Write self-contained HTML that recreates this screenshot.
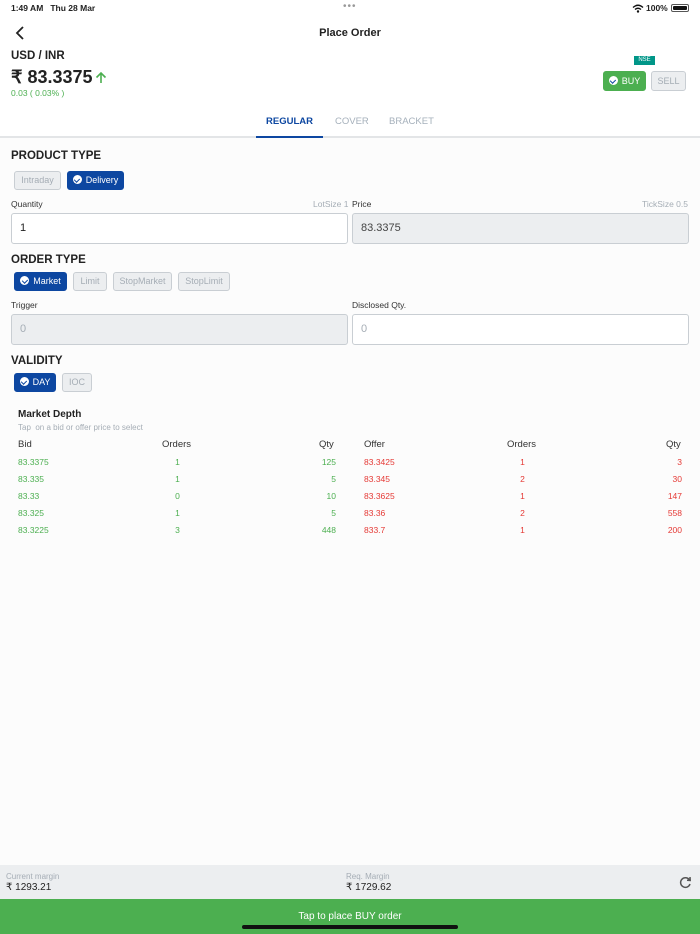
<!DOCTYPE html>
<html><head><meta charset="utf-8"><style>
*{margin:0;padding:0;box-sizing:border-box}
body{width:700px;height:934px;position:relative;overflow:hidden;background:#fcfcfc;font-family:"Liberation Sans",sans-serif;color:#222}
.a{position:absolute;white-space:nowrap}
.hdr{position:absolute;left:0;top:0;width:700px;height:138px;background:#fff;border-bottom:2px solid #e3e5e7}
.btn{position:absolute;height:19px;border-radius:3px;font-size:9px;line-height:17px;text-align:center;border:1px solid #c9ced3;background:#eceef0;color:#a5adb5}
.on{background:#0d47a1;border-color:#0d47a1;color:#fff}
.chk{display:inline-block;width:9px;height:9px;border-radius:50%;background:#fff;vertical-align:-1px;margin-right:4px;position:relative}
.chk:after{content:"";position:absolute;left:2.5px;top:1.5px;width:2.5px;height:4px;border:solid #0d47a1;border-width:0 1.5px 1.5px 0;transform:rotate(45deg)}
.sec{font-size:11.5px;font-weight:bold;color:#222}
.lbl{font-size:8.5px;color:#333}
.inp{position:absolute;height:31px;border:1px solid #c9ced3;border-radius:3px;font-size:11px;line-height:29px;padding-left:8px}
.g{color:#4caf50;font-size:8.5px}
.r{color:#e53935;font-size:8.5px}
</style></head><body>
<div class="hdr"></div>
<div class="a" style="left:11px;top:3px;font-size:8.5px;font-weight:bold">1:49 AM&nbsp;&nbsp;&nbsp;Thu 28 Mar</div>
<div class="a" style="left:343px;top:1px;font-size:10px;color:#999;letter-spacing:1px">•••</div>
<svg class="a" style="left:632px;top:4px" width="12" height="9"><path d="M1 3.5 Q6 -1 11 3.5 M3 5.5 Q6 3 9 5.5" stroke="#111" stroke-width="1.4" fill="none"/><circle cx="6" cy="7.5" r="1.2" fill="#111"/></svg>
<div class="a" style="left:646px;top:3px;font-size:8.5px;font-weight:bold">100%</div>
<div class="a" style="left:671px;top:4px;width:18px;height:8px;border:1px solid #555;border-radius:2px;padding:1px"><div style="width:100%;height:100%;background:#111;border-radius:1px"></div></div>
<svg class="a" style="left:14px;top:25px" width="12" height="16"><path d="M9 2 L3 8 L9 14" stroke="#222" stroke-width="1.8" fill="none"/></svg>
<div class="a" style="left:0;width:700px;text-align:center;top:27px;font-size:11px;font-weight:bold">Place Order</div>
<div class="a" style="left:11px;top:50px;font-size:11.5px;font-weight:bold">USD / INR</div>
<div class="a" style="left:11px;top:67px;font-size:18px;font-weight:bold">₹ 83.3375</div>
<svg class="a" style="left:95px;top:71px" width="12" height="13"><path d="M6 12 V2 M1.5 6.5 L6 2 L10.5 6.5" stroke="#4caf50" stroke-width="1.6" fill="none"/></svg>
<div class="a g" style="left:11px;top:88px">0.03 ( 0.03% )</div>
<div class="a" style="left:634px;top:56px;width:21px;height:9px;background:#009688;color:#fff;font-size:6px;line-height:9px;text-align:center">NSE</div>
<div class="btn" style="left:603px;top:71px;width:43px;height:20px;line-height:18px;background:#4caf50;border-color:#4caf50;color:#fff"><span class="chk"></span>BUY</div>
<div class="btn" style="left:651px;top:71px;width:35px;height:20px;line-height:18px">SELL</div>
<div class="a" style="left:256px;top:116px;width:67px;text-align:center;font-size:9.5px;font-weight:bold;color:#0d47a1">REGULAR</div>
<div class="a" style="left:256px;top:136px;width:67px;height:2px;background:#0d47a1"></div>
<div class="a" style="left:335px;top:116px;font-size:9.5px;color:#a5b0bb">COVER</div>
<div class="a" style="left:389px;top:116px;font-size:9.5px;color:#a5b0bb">BRACKET</div>

<div class="a sec" style="left:11px;top:150px">PRODUCT TYPE</div>
<div class="btn" style="left:14px;top:171px;width:47px">Intraday</div>
<div class="btn on" style="left:67px;top:171px;width:57px"><span class="chk"></span>Delivery</div>
<div class="a lbl" style="left:11px;top:199px">Quantity</div>
<div class="a lbl" style="left:313px;top:199px;color:#a5adb5">LotSize 1</div>
<div class="a lbl" style="left:352px;top:199px">Price</div>
<div class="a lbl" style="left:642px;top:199px;color:#a5adb5">TickSize 0.5</div>
<div class="inp" style="left:11px;top:213px;width:337px;background:#fff">1</div>
<div class="inp" style="left:352px;top:213px;width:337px;background:#eceef0;color:#444">83.3375</div>

<div class="a sec" style="left:11px;top:254px">ORDER TYPE</div>
<div class="btn on" style="left:14px;top:272px;width:53px"><span class="chk"></span>Market</div>
<div class="btn" style="left:73px;top:272px;width:34px">Limit</div>
<div class="btn" style="left:113px;top:272px;width:59px">StopMarket</div>
<div class="btn" style="left:178px;top:272px;width:52px">StopLimit</div>
<div class="a lbl" style="left:11px;top:300px">Trigger</div>
<div class="a lbl" style="left:352px;top:300px">Disclosed Qty.</div>
<div class="inp" style="left:11px;top:314px;width:337px;background:#eceef0;color:#a5adb5">0</div>
<div class="inp" style="left:352px;top:314px;width:337px;background:#fff;color:#a5adb5">0</div>

<div class="a sec" style="left:11px;top:355px">VALIDITY</div>
<div class="btn on" style="left:14px;top:373px;width:42px"><span class="chk"></span>DAY</div>
<div class="btn" style="left:62px;top:373px;width:30px">IOC</div>

<div class="a" style="left:18px;top:409px;font-size:10px;font-weight:bold">Market Depth</div>
<div class="a" style="left:18px;top:423px;font-size:8px;color:#a5adb5">Tap&nbsp; on a bid or offer price to select</div>
<div class="a" style="left:18px;top:439px;font-size:9.5px;color:#333">Bid</div>
<div class="a" style="left:162px;top:439px;font-size:9.5px;color:#333">Orders</div>
<div class="a" style="left:319px;top:439px;font-size:9.5px;color:#333">Qty</div>
<div class="a" style="left:364px;top:439px;font-size:9.5px;color:#333">Offer</div>
<div class="a" style="left:507px;top:439px;font-size:9.5px;color:#333">Orders</div>
<div class="a" style="left:666px;top:439px;font-size:9.5px;color:#333">Qty</div>

<div class="a g" style="left:18px;top:454px;line-height:17px">83.3375<br>83.335<br>83.33<br>83.325<br>83.3225</div>
<div class="a g" style="left:160px;width:35px;text-align:center;top:454px;line-height:17px">1<br>1<br>0<br>1<br>3</div>
<div class="a g" style="left:296px;width:40px;text-align:right;top:454px;line-height:17px">125<br>5<br>10<br>5<br>448</div>
<div class="a r" style="left:364px;top:454px;line-height:17px">83.3425<br>83.345<br>83.3625<br>83.36<br>833.7</div>
<div class="a r" style="left:505px;width:35px;text-align:center;top:454px;line-height:17px">1<br>2<br>1<br>2<br>1</div>
<div class="a r" style="left:642px;width:40px;text-align:right;top:454px;line-height:17px">3<br>30<br>147<br>558<br>200</div>

<div class="a" style="left:0;top:865px;width:700px;height:34px;background:#eceef0"></div>
<div class="a" style="left:6px;top:872px;font-size:8px;color:#a5adb5">Current margin</div>
<div class="a" style="left:6px;top:882px;font-size:10px;color:#222">₹ 1293.21</div>
<div class="a" style="left:346px;top:872px;font-size:8px;color:#a5adb5">Req. Margin</div>
<div class="a" style="left:346px;top:882px;font-size:10px;color:#222">₹ 1729.62</div>
<svg class="a" style="left:679px;top:876px" width="13" height="13"><path d="M10.5 4 A4.8 4.8 0 1 0 11 8" stroke="#555" stroke-width="1.5" fill="none"/><path d="M8 4.2 L11.2 4.4 L11 1" stroke="#555" stroke-width="1.5" fill="none"/></svg>
<div class="a" style="left:0;top:899px;width:700px;height:35px;background:#4caf50"></div>
<div class="a" style="left:0;width:700px;text-align:center;top:911px;font-size:10px;color:#fff">Tap to place BUY order</div>
<div class="a" style="left:242px;top:925px;width:216px;height:4px;border-radius:2px;background:#111"></div>
</body></html>
